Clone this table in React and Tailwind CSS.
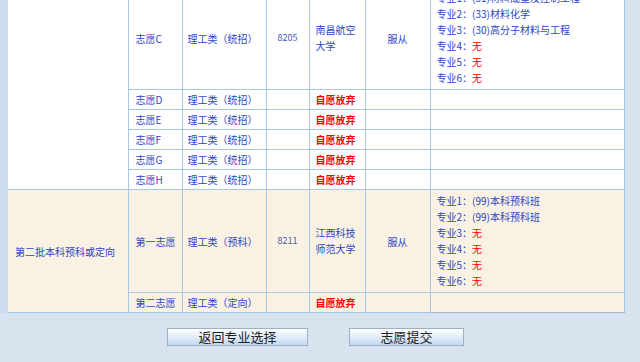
import React from "react";

const blue = "text-[#2b44c6]";
const cell = "border border-[#a9c7e6] align-middle";

const smallRows = ["D", "E", "F", "G", "H"];

const Majors = ({ items }) => (
  <div className="leading-[16px]">
    {items.map((m, i) => (
      <div key={i} className="whitespace-nowrap">
        <span className={blue}>专业{i + 1}：</span>
        {m ? <span className={blue}>{m}</span> : <span className="text-[#ff0000]">无</span>}
      </div>
    ))}
  </div>
);

const Abandon = () => <span className="font-bold text-[#ff0000]">自愿放弃</span>;

export default function App() {
  return (
    <div
      className="h-[362px] w-[640px] overflow-hidden bg-[#d7e3ef] text-[10px]"
      style={{ fontFamily: '"Noto Sans CJK SC", "Noto Sans", sans-serif' }}
    >
      <div className="-mt-[14px] flex">
        <div className="w-[8px] bg-[#cbdcf1]" />
        <table className="w-[616px] table-fixed border-collapse">
          <colgroup>
            <col className="w-[120px]" />
            <col className="w-[54px]" />
            <col className="w-[84px]" />
            <col className="w-[43px]" />
            <col className="w-[56px]" />
            <col className="w-[65px]" />
            <col className="w-[194px]" />
          </colgroup>
          <tbody className="bg-white">
            <tr className="h-[102px]">
              <td rowSpan={6} className={`${cell} border-l-0`} />
              <td className={`${cell} pl-[7px] ${blue}`}>志愿C</td>
              <td className={`${cell} pl-[5px] ${blue}`}>理工类（统招）</td>
              <td className={`${cell} text-center text-[9px] text-[#4658b8]`}>8205</td>
              <td className={`${cell} px-[6px] leading-[16px] ${blue}`}>南昌航空大学</td>
              <td className={`${cell} text-center ${blue}`}>服从</td>
              <td className={`${cell} pl-[6px] py-[3px]`}>
                <Majors items={["(31)材料成型及控制工程", "(33)材料化学", "(30)高分子材料与工程", null, null, null]} />
              </td>
            </tr>
            {smallRows.map((r) => (
              <tr key={r} className="h-[20px]">
                <td className={`${cell} pl-[7px] ${blue}`}>志愿{r}</td>
                <td className={`${cell} pl-[5px] ${blue}`}>理工类（统招）</td>
                <td className={cell} />
                <td className={`${cell} px-[6px]`}>
                  <Abandon />
                </td>
                <td className={cell} />
                <td className={cell} />
              </tr>
            ))}
          </tbody>
          <tbody className="bg-[#f9f1e1]">
            <tr className="h-[102px]">
              <td rowSpan={2} className={`${cell} border-l-0 pl-[7px] ${blue}`}>
                第二批本科预科或定向
              </td>
              <td className={`${cell} pl-[7px] ${blue}`}>第一志愿</td>
              <td className={`${cell} pl-[5px] ${blue}`}>理工类（预科）</td>
              <td className={`${cell} text-center text-[9px] text-[#4658b8]`}>8211</td>
              <td className={`${cell} px-[6px] leading-[16px] ${blue}`}>江西科技师范大学</td>
              <td className={`${cell} text-center ${blue}`}>服从</td>
              <td className={`${cell} pl-[6px] py-[3px]`}>
                <Majors items={["(99)本科预科班", "(99)本科预科班", null, null, null, null]} />
              </td>
            </tr>
            <tr className="h-[20px]">
              <td className={`${cell} pl-[7px] ${blue}`}>第二志愿</td>
              <td className={`${cell} pl-[5px] ${blue}`}>理工类（定向）</td>
              <td className={cell} />
              <td className={`${cell} px-[6px]`}>
                <Abandon />
              </td>
              <td className={cell} />
              <td className={`${cell} border-b-[#a3b5c8]`} />
            </tr>
          </tbody>
        </table>
      </div>

      <div className="mt-[15px] flex justify-center gap-[41px] pr-[9px]">
        <button
          type="button"
          className="h-[18px] w-[141px] border border-[#9fb0c2] bg-gradient-to-b from-white to-[#c3d9f3] text-[13px] leading-[16px] text-[#222]"
        >
          返回专业选择
        </button>
        <button
          type="button"
          className="h-[18px] w-[115px] border border-[#9fb0c2] bg-gradient-to-b from-white to-[#c3d9f3] text-[13px] leading-[16px] text-[#222]"
        >
          志愿提交
        </button>
      </div>
    </div>
  );
}
